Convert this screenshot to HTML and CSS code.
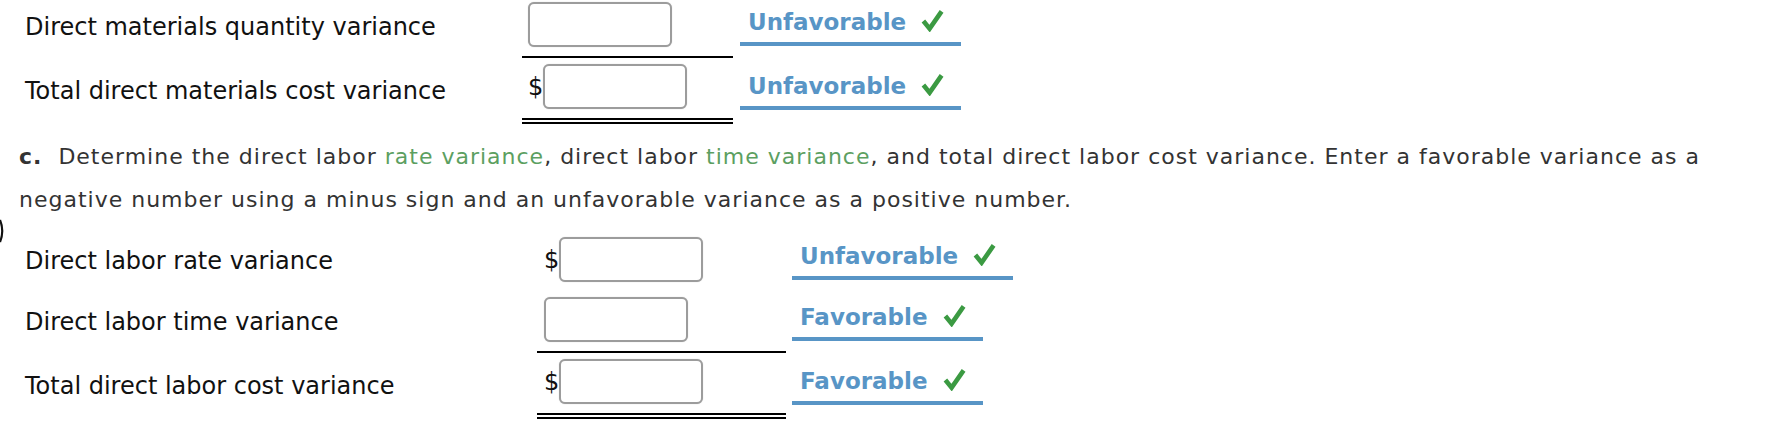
FILE: index.html
```html
<!DOCTYPE html>
<html>
<head>
<meta charset="utf-8">
<link rel="stylesheet" href="styles.css">
</head>
<body>
<svg class="edge-mark" width="6" height="24" viewBox="0 0 6 24"><path d="M0 1 Q4.5 12 0 23" fill="none" stroke="#111" stroke-width="2.2"/></svg>

<div class="sheet sec-a">
  <div class="label">Direct materials quantity variance</div>
  <div class="amount line-single"><span class="box"></span></div>
  <div class="status-cell"><span class="status">Unfavorable<svg class="check" viewBox="0 0 24 24"><path d="M2.5 12.5 L9 20.5 L21.5 2.5" fill="none" stroke="#3b9a42" stroke-width="4.8" stroke-linejoin="miter"/></svg></span></div>

  <div class="label">Total direct materials cost variance</div>
  <div class="amount line-double"><span class="dollar">$</span><span class="box"></span></div>
  <div class="status-cell"><span class="status">Unfavorable<svg class="check" viewBox="0 0 24 24"><path d="M2.5 12.5 L9 20.5 L21.5 2.5" fill="none" stroke="#3b9a42" stroke-width="4.8" stroke-linejoin="miter"/></svg></span></div>
</div>

<p class="instr"><b>c.</b>&nbsp; Determine the direct labor <span class="hl">rate variance</span>, direct labor <span class="hl">time variance</span>, and total direct labor cost variance. Enter a favorable variance as a negative number using a minus sign and an unfavorable variance as a positive number.</p>

<div class="sheet sec-b">
  <div class="label">Direct labor rate variance</div>
  <div class="amount"><span class="dollar">$</span><span class="box"></span></div>
  <div class="status-cell"><span class="status">Unfavorable<svg class="check" viewBox="0 0 24 24"><path d="M2.5 12.5 L9 20.5 L21.5 2.5" fill="none" stroke="#3b9a42" stroke-width="4.8" stroke-linejoin="miter"/></svg></span></div>

  <div class="label">Direct labor time variance</div>
  <div class="amount line-single"><span class="box"></span></div>
  <div class="status-cell"><span class="status">Favorable<svg class="check" viewBox="0 0 24 24"><path d="M2.5 12.5 L9 20.5 L21.5 2.5" fill="none" stroke="#3b9a42" stroke-width="4.8" stroke-linejoin="miter"/></svg></span></div>

  <div class="label">Total direct labor cost variance</div>
  <div class="amount line-double"><span class="dollar">$</span><span class="box"></span></div>
  <div class="status-cell"><span class="status">Favorable<svg class="check" viewBox="0 0 24 24"><path d="M2.5 12.5 L9 20.5 L21.5 2.5" fill="none" stroke="#3b9a42" stroke-width="4.8" stroke-linejoin="miter"/></svg></span></div>
</div>
</body>
</html>
```

FILE: styles.css
```css
html, body {
  margin: 0;
  padding: 0;
  background: #fff;
}
body {
  position: relative;
  padding-left: 19px;
  font-family: "DejaVu Sans", Verdana, sans-serif;
  color: #111;
  overflow: hidden;
  height: 426px;
}
.edge-mark {
  position: absolute;
  left: 0;
  top: 219px;
}
.sheet {
  display: grid;
  align-items: center;
}
.sec-a {
  margin-top: -4px;
  grid-template-columns: 503px 211px auto;
}
.sec-b {
  grid-template-columns: 518px 249px auto;
}
.label {
  padding-left: 6px;
  font-size: 24px;
  line-height: normal;
  color: #111;
}
.amount {
  display: flex;
  align-items: center;
  padding: 6px 0 9px 6px;
  font-size: 24px;
}
.sec-b .amount {
  padding-left: 7px;
}
.line-single {
  border-bottom: 2px solid #000;
}
.line-double {
  border-bottom: 6px double #000;
}
.dollar {
  color: #111;
  line-height: normal;
}
.box {
  display: block;
  width: 144px;
  height: 45px;
  box-sizing: border-box;
  border: 2px solid #9c9c9c;
  border-radius: 6px;
  background: #fff;
  box-shadow: 0 0 1px rgba(0, 0, 0, 0.25);
}
.status-cell {
  padding-left: 7px;
}
.sec-b .status-cell {
  padding-left: 6px;
}
.status {
  display: inline-flex;
  align-items: center;
  padding: 0 17px 6px 8px;
  border-bottom: 4px solid #5895c6;
  color: #5895c6;
  font-weight: bold;
  font-size: 23px;
  line-height: normal;
}
.check {
  width: 23px;
  height: 23px;
  margin-left: 15px;
  margin-bottom: 4px;
}
.instr {
  margin: 11px 0 10px 0;
  font-size: 22px;
  letter-spacing: 1px;
  line-height: 43px;
  color: #333;
  width: 1720px;
}
.instr b {
  color: #333;
}
.hl {
  color: #5c9f61;
}
```
